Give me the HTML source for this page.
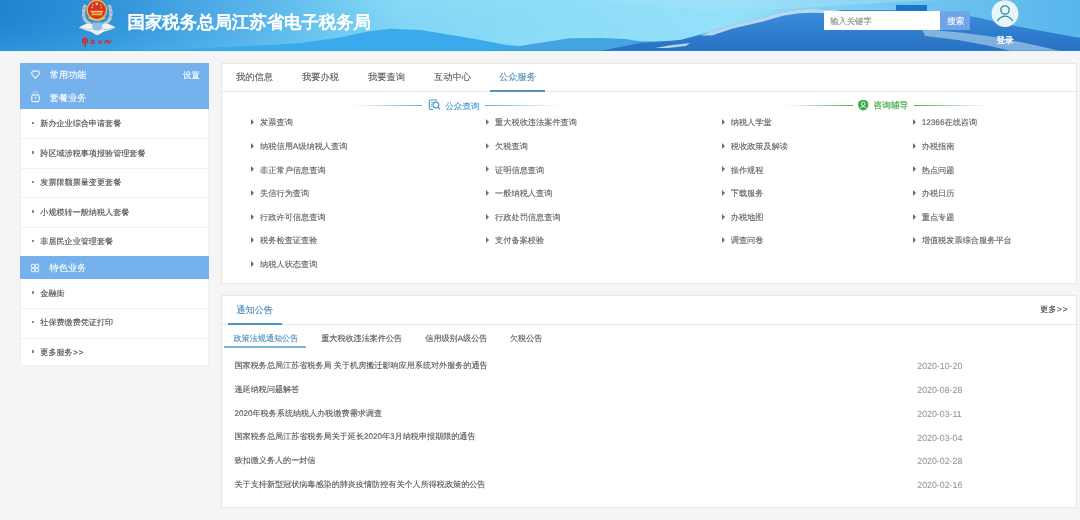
<!DOCTYPE html>
<html><head><meta charset="utf-8">
<style>
*{margin:0;padding:0;box-sizing:border-box}
html,body{width:1080px;height:520px;overflow:hidden;background:#f5f5f5;font-family:"Liberation Sans",sans-serif;text-rendering:geometricPrecision;color:#555}
.a{position:absolute}
.t{position:absolute;white-space:nowrap;line-height:1}
.bul{position:absolute;width:2.6px;height:2.6px;background:#8a8a8a}
.tri{position:absolute;width:0;height:0;border-left:3.3px solid #707070;border-top:3px solid transparent;border-bottom:3px solid transparent}
</style></head><body>
<div style="position:absolute;left:-6px;top:-6px;width:1092px;height:532px;background:#f5f5f5;filter:blur(0.4px)"><div style="position:absolute;left:6px;top:6px;width:1080px;height:520px">

<svg class="a" style="left:-6px;top:-6px" width="1092" height="58" viewBox="-6 -6 1092 58">
<defs>
<linearGradient id="sky" x1="0" y1="0" x2="1080" y2="0" gradientUnits="userSpaceOnUse">
<stop offset="0" stop-color="#2186d2"/>
<stop offset="0.1" stop-color="#3295db"/>
<stop offset="0.23" stop-color="#5ab6eb"/>
<stop offset="0.3" stop-color="#72cbf3"/>
<stop offset="0.37" stop-color="#8adcf8"/>
<stop offset="0.5" stop-color="#90e0f9"/>
<stop offset="0.68" stop-color="#95e0fa"/>
<stop offset="0.85" stop-color="#70c4f0"/>
<stop offset="1" stop-color="#58b6ec"/>
</linearGradient>
<linearGradient id="skyv" x1="0" y1="0" x2="0" y2="51" gradientUnits="userSpaceOnUse">
<stop offset="0" stop-color="#0a5fb0" stop-opacity="0.02"/>
<stop offset="1" stop-color="#5fd0ff" stop-opacity="0.18"/>
</linearGradient>
<linearGradient id="m3" x1="0" y1="0" x2="0" y2="51" gradientUnits="userSpaceOnUse">
<stop offset="0.18" stop-color="#3d8edb"/>
<stop offset="0.6" stop-color="#3080cf"/>
<stop offset="1" stop-color="#2870c3"/>
</linearGradient>
<linearGradient id="hfade" x1="0" y1="0" x2="700" y2="0" gradientUnits="userSpaceOnUse">
<stop offset="0" stop-color="#fff"/>
<stop offset="0.5" stop-color="#fff"/>
<stop offset="1" stop-color="#000"/>
</linearGradient>
<mask id="mk"><rect x="-6" y="-6" width="1092" height="57" fill="url(#hfade)"/></mask>
</defs>
<rect x="-6" y="-6" width="1092" height="57" fill="url(#sky)"/>
<rect x="-6" y="-6" width="1092" height="57" fill="url(#skyv)" mask="url(#mk)"/>
<path d="M600 0 L700 10 L780 9 L880 3 L940 0 Z" fill="#a6e2f9" opacity="0.45"/>
<path d="M120 51 L200 48 L270 45 L300 43 L340 37.5 L365 32 L390 28.8 L420 30 L445 34 L475 39 L507 45 L540 47.5 L540 51 Z" fill="#3aaaed"/>
<path d="M490 51 L520 46 L545 42 L570 38.3 L600 38 L625 39 L640 41.3 L680 42 L700 51 Z" fill="#44a4e2"/>
<path d="M600 51 L640 43 L680 40 L710 32 L732 25 L762 18 L783 12 L799 9.4 L813 9 L835 10 L896 10 L930 11 L960 15 L975 17 L1020 27 L1086 39 L1086 51 Z" fill="url(#m3)"/>
<path d="M700 35.5 L710 32 L732 25 L762 18 L783 12 L799 9.4 L813 9 L835 10 L850 12 L835 13.5 L813 12.8 L799 13.2 L783 15.8 L762 21.8 L732 28.8 L712 35.5 Z" fill="#e3f2fb" opacity="0.75"/>
<path d="M922 29 L960 32.5 L995 37 L1030 44 L1065 52 L1015 52 L990 46 L958 40 L925 36 Z" fill="#c6e0f2" opacity="0.55"/>
<path d="M655 48 L672 45 L690 43 L686 46 L668 48 Z" fill="#d6ecf8" opacity="0.8"/>
<rect x="896" y="5" width="31" height="6" fill="#1a74cc"/>
<rect x="-6" y="50.2" width="1092" height="0.8" fill="#3a98d6" opacity="0.5"/>
<rect x="-6" y="51" width="1092" height="1" fill="#e4f7fd"/>
</svg>
<svg class="a" style="left:75px;top:0" width="44" height="48" viewBox="0 0 44 48">
<path d="M10.5 5 Q7 12 9.5 19 Q12 23 16 24" fill="none" stroke="#c5ccd2" stroke-width="3.2" opacity="0.9"/>
<path d="M34 5 Q37.5 12 35 19 Q32.5 23 28.5 24" fill="none" stroke="#c5ccd2" stroke-width="3.2" opacity="0.9"/>
<path d="M10.5 7 L8.5 9 M9 12 L7 13 M9.5 16 L7.5 17.5" stroke="#7f8b96" stroke-width="0.8"/>
<path d="M34 7 L36 9 M35.5 12 L37.5 13 M35 16 L37 17.5" stroke="#7f8b96" stroke-width="0.8"/>
<circle cx="21.8" cy="10" r="10.4" fill="#e8bc48"/>
<circle cx="21.8" cy="10" r="9" fill="#d8302e"/>
<circle cx="21.8" cy="3.8" r="1.4" fill="#f5d24a"/>
<circle cx="17.8" cy="5" r="0.8" fill="#f5d24a"/>
<circle cx="25.8" cy="5" r="0.8" fill="#f5d24a"/>
<circle cx="17.2" cy="7.6" r="0.8" fill="#f5d24a"/>
<circle cx="26.4" cy="7.6" r="0.8" fill="#f5d24a"/>
<rect x="15.6" y="10.8" width="12.4" height="1.5" fill="#f2c94a"/>
<rect x="16.6" y="12.3" width="10.4" height="3" fill="#e9b93e"/>
<path d="M17.6 13.2 L26 13.2" stroke="#d8302e" stroke-width="0.7"/>
<path d="M13.2 16.6 Q21.8 21.8 30.4 16.6 L29.8 18.8 Q21.8 23 13.8 18.8 Z" fill="#f0c040"/>
<path d="M4 27.5 Q12 22 18 24 L22.3 30 L26.6 24 Q32.6 22 40.6 27.5 Q34 31 28 32 Q24 35 22.3 35 Q20.6 35 16.6 32 Q10.6 31 4 27.5 Z" fill="#eef2f5"/>
<path d="M17 22.5 L27.6 22.5 L27 29 Q22.3 32.5 17.6 29 Z" fill="#8fc0e4"/>
<path d="M6 28 Q13 30.5 17 29" stroke="#aab4bc" stroke-width="0.7" fill="none"/>
<path d="M38.6 28 Q31.6 30.5 27.6 29" stroke="#aab4bc" stroke-width="0.7" fill="none"/>
<path d="M10 37 L10.3 47 M7.6 39.6 L12.4 39.6 L12 42.6 L8 42.6 Z" stroke="#d02a2f" stroke-width="1.5" fill="none"/>
<path d="M15.5 41 Q17 39 19 41 Q17.5 43 15.8 43.5 M17 41.5 L19.5 44" stroke="#d02a2f" stroke-width="1.2" fill="none"/>
<path d="M23.5 40.5 L24 44 M25.5 40 Q26.5 42 25.8 44" stroke="#d02a2f" stroke-width="1.1" fill="none"/>
<path d="M29.5 43 Q31 39 33 41 Q34.5 44 36.5 40.5 M31.5 40 L34 44" stroke="#d02a2f" stroke-width="1.2" fill="none"/>
</svg>
<div class="t" style="left:127.50px;top:14.40px;font-size:17.4px;color:#fff;-webkit-text-stroke:0.1px #fff;-webkit-text-stroke:0.8px #fff">国家税务总局江苏省电子税务局</div>
<div class="a" style="left:824px;top:11px;width:116px;height:19px;background:#fff"></div>
<div class="t" style="left:830.20px;top:17.45px;font-size:8.3px;color:#8a8a8a;-webkit-text-stroke:0.1px #8a8a8a;">输入关键字</div>
<div class="a" style="left:940px;top:11px;width:30px;height:19px;background:#6fa5e7"></div>
<div class="t" style="left:947.20px;top:17.33px;font-size:8.6px;color:#fff;-webkit-text-stroke:0.1px #fff;">搜索</div>
<svg class="a" style="left:990px;top:0" width="30" height="30" viewBox="0 0 30 30">
<circle cx="15" cy="13.6" r="13.4" fill="#e9f6f9"/>
<circle cx="15" cy="10" r="4.2" fill="none" stroke="#2a8d9c" stroke-width="1.3"/>
<path d="M7.2 20.8 Q15 11.5 22.8 20.8" fill="none" stroke="#2a8d9c" stroke-width="1.3"/>
</svg>
<div class="t" style="left:996.50px;top:36.23px;font-size:8.6px;color:#fff;-webkit-text-stroke:0.1px #fff;-webkit-text-stroke:0.3px #fff">登录</div>
<div class="a" style="left:20px;top:63px;width:189px;height:303px;background:#fff;border:1px solid #eeeeee"></div>
<div class="a" style="left:20px;top:63px;width:189px;height:45.5px;background:#74b1ed"></div>
<svg class="a" style="left:29px;top:68px" width="13" height="13" viewBox="0 0 13 13">
<path d="M6.5 10.2 L3.4 7 Q2.3 5.7 2.8 4.2 Q3.4 2.7 4.8 2.7 Q5.9 2.7 6.5 3.7 Q7.1 2.7 8.2 2.7 Q9.6 2.7 10.2 4.2 Q10.7 5.7 9.6 7 Z" fill="none" stroke="#fff" stroke-width="1.05" stroke-linejoin="round"/>
</svg>
<div class="t" style="left:49.80px;top:70.70px;font-size:9.2px;color:#fff;-webkit-text-stroke:0.1px #fff;-webkit-text-stroke:0.12px #fff">常用功能</div>
<div class="t" style="left:183.00px;top:71.01px;font-size:8.4px;color:#fff;-webkit-text-stroke:0.1px #fff;-webkit-text-stroke:0.12px #fff">设置</div>
<svg class="a" style="left:29px;top:87px" width="13" height="17" viewBox="0 0 13 17">
<path d="M4.2 8 Q4.2 4.4 6.5 4.4 Q8.8 4.4 8.8 8" fill="none" stroke="#fff" stroke-width="0.85" opacity="0.6"/>
<rect x="2.8" y="8" width="7.4" height="6.6" rx="1.1" fill="none" stroke="#fff" stroke-width="1"/>
<path d="M5.3 10.3 L7.7 10.3 L6.5 12 Z" fill="#fff"/>
</svg>
<div class="t" style="left:49.80px;top:93.80px;font-size:9.2px;color:#fff;-webkit-text-stroke:0.1px #fff;-webkit-text-stroke:0.12px #fff">套餐业务</div>
<div class="bul" style="left:31.6px;top:121.8px"></div>
<div class="t" style="left:40.30px;top:120.47px;font-size:8.1px;color:#4a4a4a;-webkit-text-stroke:0.1px #4a4a4a;">新办企业综合申请套餐</div>
<div class="a" style="left:21px;top:138.0px;width:187px;height:1px;background:#f0f0f0"></div>
<div class="bul" style="left:31.6px;top:151.2px"></div>
<div class="t" style="left:40.30px;top:149.97px;font-size:8.1px;color:#4a4a4a;-webkit-text-stroke:0.1px #4a4a4a;">跨区域涉税事项报验管理套餐</div>
<div class="a" style="left:21px;top:167.5px;width:187px;height:1px;background:#f0f0f0"></div>
<div class="bul" style="left:31.6px;top:180.8px"></div>
<div class="t" style="left:40.30px;top:179.47px;font-size:8.1px;color:#4a4a4a;-webkit-text-stroke:0.1px #4a4a4a;">发票限额票量变更套餐</div>
<div class="a" style="left:21px;top:197.0px;width:187px;height:1px;background:#f0f0f0"></div>
<div class="bul" style="left:31.6px;top:210.2px"></div>
<div class="t" style="left:40.30px;top:208.97px;font-size:8.1px;color:#4a4a4a;-webkit-text-stroke:0.1px #4a4a4a;">小规模转一般纳税人套餐</div>
<div class="a" style="left:21px;top:226.5px;width:187px;height:1px;background:#f0f0f0"></div>
<div class="bul" style="left:31.6px;top:239.8px"></div>
<div class="t" style="left:40.30px;top:238.47px;font-size:8.1px;color:#4a4a4a;-webkit-text-stroke:0.1px #4a4a4a;">非居民企业管理套餐</div>
<div class="a" style="left:20px;top:256px;width:189px;height:22.5px;background:#74b1ed"></div>
<svg class="a" style="left:29px;top:262px" width="12" height="12" viewBox="0 0 12 12">
<circle cx="4" cy="4" r="1.9" fill="none" stroke="#fff" stroke-width="0.9"/>
<circle cx="8" cy="4" r="1.9" fill="none" stroke="#fff" stroke-width="0.9"/>
<circle cx="4" cy="8" r="1.9" fill="none" stroke="#fff" stroke-width="0.9"/>
<circle cx="8" cy="8" r="1.9" fill="none" stroke="#fff" stroke-width="0.9"/>
</svg>
<div class="t" style="left:49.60px;top:263.60px;font-size:9.2px;color:#fff;-webkit-text-stroke:0.1px #fff;-webkit-text-stroke:0.12px #fff">特色业务</div>
<div class="bul" style="left:31.6px;top:291.1px"></div>
<div class="t" style="left:40.30px;top:289.87px;font-size:8.1px;color:#4a4a4a;-webkit-text-stroke:0.1px #4a4a4a;">金融街</div>
<div class="a" style="left:21px;top:308.0px;width:187px;height:1px;background:#f0f0f0"></div>
<div class="bul" style="left:31.6px;top:320.6px"></div>
<div class="t" style="left:40.30px;top:319.37px;font-size:8.1px;color:#4a4a4a;-webkit-text-stroke:0.1px #4a4a4a;">社保费缴费凭证打印</div>
<div class="a" style="left:21px;top:337.5px;width:187px;height:1px;background:#f0f0f0"></div>
<div class="bul" style="left:31.6px;top:350.1px"></div>
<div class="t" style="left:40.30px;top:348.87px;font-size:8.1px;color:#4a4a4a;-webkit-text-stroke:0.1px #4a4a4a;">更多服务<span style="letter-spacing:0.8px;margin-left:0.5px">&gt;&gt;</span></div>
<div class="a" style="left:221px;top:63px;width:856px;height:220.8px;background:#fff;border:1px solid #e8e8e8"></div>
<div class="a" style="left:222px;top:90.5px;width:854px;height:1px;background:#e6e6e6"></div>
<div class="t" style="left:236.00px;top:73.48px;font-size:9.25px;color:#585858;-webkit-text-stroke:0.1px #585858;">我的信息</div>
<div class="t" style="left:302.00px;top:73.48px;font-size:9.25px;color:#585858;-webkit-text-stroke:0.1px #585858;">我要办税</div>
<div class="t" style="left:368.00px;top:73.48px;font-size:9.25px;color:#585858;-webkit-text-stroke:0.1px #585858;">我要查询</div>
<div class="t" style="left:434.00px;top:73.48px;font-size:9.25px;color:#585858;-webkit-text-stroke:0.1px #585858;">互动中心</div>
<div class="t" style="left:499.00px;top:73.48px;font-size:9.25px;color:#4a8abc;-webkit-text-stroke:0.1px #4a8abc;">公众服务</div>
<div class="a" style="left:490px;top:89.8px;width:55px;height:2px;background:#5591be"></div>
<div class="a" style="left:352px;top:104.5px;width:70px;height:1.2px;background:linear-gradient(to right,rgba(110,178,220,0),#68aedb)"></div>
<div class="a" style="left:485px;top:104.5px;width:75px;height:1.2px;background:linear-gradient(to left,rgba(110,178,220,0),#68aedb)"></div>
<svg class="a" style="left:427px;top:98px" width="14" height="13" viewBox="0 0 14 13">
<path d="M10.5 2 L3.6 2 Q2.3 2 2.3 3.3 L2.3 10.3 Q2.3 11.5 3.6 11.5 L6.2 11.5" fill="none" stroke="#3d9cc8" stroke-width="1.1"/>
<path d="M4 4.5 L6.3 4.5 M4 6.8 L5.2 6.8 M4 9 L5.2 9" stroke="#3d9cc8" stroke-width="0.8"/>
<circle cx="8.9" cy="7" r="2.9" fill="none" stroke="#3d9cc8" stroke-width="1.1"/>
<path d="M11 9.1 L13 11.4" stroke="#3d9cc8" stroke-width="1.2"/>
</svg>
<div class="t" style="left:445.20px;top:101.63px;font-size:8.6px;color:#45a0d2;-webkit-text-stroke:0.1px #45a0d2;">公众查询</div>
<div class="a" style="left:785px;top:104.5px;width:68px;height:1.2px;background:linear-gradient(to right,rgba(74,168,74,0),#52ad52)"></div>
<div class="a" style="left:913.5px;top:104.5px;width:72px;height:1.2px;background:linear-gradient(to left,rgba(74,168,74,0),#52ad52)"></div>
<svg class="a" style="left:857px;top:98.5px" width="12.5" height="12" viewBox="0 0 12.5 12">
<path d="M6.2 0.8 Q9 0.8 10.6 2.4 Q11.6 4 11.3 6.6 Q11 9.6 8.8 10.8 Q6.2 11.8 3.6 10.8 Q1.4 9.6 1.1 6.6 Q0.8 4 1.8 2.4 Q3.4 0.8 6.2 0.8 Z" fill="#3fab4c"/>
<circle cx="6.2" cy="4.8" r="1.8" fill="none" stroke="#e8f8e8" stroke-width="0.9"/>
<path d="M3 9.3 Q6.2 5.8 9.4 9.3" fill="none" stroke="#e8f8e8" stroke-width="0.9"/>
</svg>
<div class="t" style="left:873.50px;top:101.39px;font-size:8.7px;color:#5ab45a;-webkit-text-stroke:0.1px #5ab45a;-webkit-text-stroke:0.3px #5ab45a">咨询辅导</div>
<div class="tri" style="left:251.1px;top:119.1px"></div>
<div class="t" style="left:260.10px;top:119.28px;font-size:8.2px;color:#606060;-webkit-text-stroke:0.1px #606060;">发票查询</div>
<div class="tri" style="left:251.1px;top:142.7px"></div>
<div class="t" style="left:260.10px;top:142.91px;font-size:8.2px;color:#606060;-webkit-text-stroke:0.1px #606060;">纳税信用A级纳税人查询</div>
<div class="tri" style="left:251.1px;top:166.4px"></div>
<div class="t" style="left:260.10px;top:166.54px;font-size:8.2px;color:#606060;-webkit-text-stroke:0.1px #606060;">非正常户信息查询</div>
<div class="tri" style="left:251.1px;top:190.0px"></div>
<div class="t" style="left:260.10px;top:190.17px;font-size:8.2px;color:#606060;-webkit-text-stroke:0.1px #606060;">失信行为查询</div>
<div class="tri" style="left:251.1px;top:213.6px"></div>
<div class="t" style="left:260.10px;top:213.80px;font-size:8.2px;color:#606060;-webkit-text-stroke:0.1px #606060;">行政许可信息查询</div>
<div class="tri" style="left:251.1px;top:237.2px"></div>
<div class="t" style="left:260.10px;top:237.43px;font-size:8.2px;color:#606060;-webkit-text-stroke:0.1px #606060;">税务检查证查验</div>
<div class="tri" style="left:251.1px;top:260.9px"></div>
<div class="t" style="left:260.10px;top:261.06px;font-size:8.2px;color:#606060;-webkit-text-stroke:0.1px #606060;">纳税人状态查询</div>
<div class="tri" style="left:486.1px;top:119.1px"></div>
<div class="t" style="left:495.10px;top:119.28px;font-size:8.2px;color:#606060;-webkit-text-stroke:0.1px #606060;">重大税收违法案件查询</div>
<div class="tri" style="left:486.1px;top:142.7px"></div>
<div class="t" style="left:495.10px;top:142.91px;font-size:8.2px;color:#606060;-webkit-text-stroke:0.1px #606060;">欠税查询</div>
<div class="tri" style="left:486.1px;top:166.4px"></div>
<div class="t" style="left:495.10px;top:166.54px;font-size:8.2px;color:#606060;-webkit-text-stroke:0.1px #606060;">证明信息查询</div>
<div class="tri" style="left:486.1px;top:190.0px"></div>
<div class="t" style="left:495.10px;top:190.17px;font-size:8.2px;color:#606060;-webkit-text-stroke:0.1px #606060;">一般纳税人查询</div>
<div class="tri" style="left:486.1px;top:213.6px"></div>
<div class="t" style="left:495.10px;top:213.80px;font-size:8.2px;color:#606060;-webkit-text-stroke:0.1px #606060;">行政处罚信息查询</div>
<div class="tri" style="left:486.1px;top:237.2px"></div>
<div class="t" style="left:495.10px;top:237.43px;font-size:8.2px;color:#606060;-webkit-text-stroke:0.1px #606060;">支付备案校验</div>
<div class="tri" style="left:721.7px;top:119.1px"></div>
<div class="t" style="left:730.70px;top:119.28px;font-size:8.2px;color:#606060;-webkit-text-stroke:0.1px #606060;">纳税人学堂</div>
<div class="tri" style="left:721.7px;top:142.7px"></div>
<div class="t" style="left:730.70px;top:142.91px;font-size:8.2px;color:#606060;-webkit-text-stroke:0.1px #606060;">税收政策及解读</div>
<div class="tri" style="left:721.7px;top:166.4px"></div>
<div class="t" style="left:730.70px;top:166.54px;font-size:8.2px;color:#606060;-webkit-text-stroke:0.1px #606060;">操作规程</div>
<div class="tri" style="left:721.7px;top:190.0px"></div>
<div class="t" style="left:730.70px;top:190.17px;font-size:8.2px;color:#606060;-webkit-text-stroke:0.1px #606060;">下载服务</div>
<div class="tri" style="left:721.7px;top:213.6px"></div>
<div class="t" style="left:730.70px;top:213.80px;font-size:8.2px;color:#606060;-webkit-text-stroke:0.1px #606060;">办税地图</div>
<div class="tri" style="left:721.7px;top:237.2px"></div>
<div class="t" style="left:730.70px;top:237.43px;font-size:8.2px;color:#606060;-webkit-text-stroke:0.1px #606060;">调查问卷</div>
<div class="tri" style="left:912.7px;top:119.1px"></div>
<div class="t" style="left:921.70px;top:119.28px;font-size:8.2px;color:#606060;-webkit-text-stroke:0.1px #606060;">12366在线咨询</div>
<div class="tri" style="left:912.7px;top:142.7px"></div>
<div class="t" style="left:921.70px;top:142.91px;font-size:8.2px;color:#606060;-webkit-text-stroke:0.1px #606060;">办税指南</div>
<div class="tri" style="left:912.7px;top:166.4px"></div>
<div class="t" style="left:921.70px;top:166.54px;font-size:8.2px;color:#606060;-webkit-text-stroke:0.1px #606060;">热点问题</div>
<div class="tri" style="left:912.7px;top:190.0px"></div>
<div class="t" style="left:921.70px;top:190.17px;font-size:8.2px;color:#606060;-webkit-text-stroke:0.1px #606060;">办税日历</div>
<div class="tri" style="left:912.7px;top:213.6px"></div>
<div class="t" style="left:921.70px;top:213.80px;font-size:8.2px;color:#606060;-webkit-text-stroke:0.1px #606060;">重点专题</div>
<div class="tri" style="left:912.7px;top:237.2px"></div>
<div class="t" style="left:921.70px;top:237.43px;font-size:8.2px;color:#606060;-webkit-text-stroke:0.1px #606060;">增值税发票综合服务平台</div>
<div class="a" style="left:221px;top:294.6px;width:856px;height:213.9px;background:#fff;border:1px solid #e8e8e8"></div>
<div class="a" style="left:222px;top:323.5px;width:854px;height:1px;background:#e6e6e6"></div>
<div class="t" style="left:236.20px;top:305.90px;font-size:9.2px;color:#4a88ba;-webkit-text-stroke:0.1px #4a88ba;">通知公告</div>
<div class="a" style="left:227.6px;top:322.8px;width:54px;height:2px;background:#5591be"></div>
<div class="t" style="left:1040.00px;top:305.88px;font-size:8.2px;color:#444;-webkit-text-stroke:0.1px #444;">更多<span style="letter-spacing:0.9px;margin-left:0.6px">&gt;&gt;</span></div>
<div class="t" style="left:233.50px;top:335.22px;font-size:8.1px;color:#4b8fc1;-webkit-text-stroke:0.1px #4b8fc1;">政策法规通知公告</div>
<div class="t" style="left:321.20px;top:335.22px;font-size:8.1px;color:#555;-webkit-text-stroke:0.1px #555;">重大税收违法案件公告</div>
<div class="t" style="left:425.30px;top:335.22px;font-size:8.1px;color:#555;-webkit-text-stroke:0.1px #555;">信用级别A级公告</div>
<div class="t" style="left:510.00px;top:335.22px;font-size:8.1px;color:#555;-webkit-text-stroke:0.1px #555;">欠税公告</div>
<div class="a" style="left:224px;top:346.3px;width:81.5px;height:1.5px;background:#7db4dc"></div>
<div class="t" style="left:234.50px;top:361.92px;font-size:8.1px;color:#555;-webkit-text-stroke:0.1px #555;">国家税务总局江苏省税务局 关于机房搬迁影响应用系统对外服务的通告</div>
<div class="t" style="left:917.30px;top:362.16px;font-size:8.8px;color:#999;-webkit-text-stroke:0.1px #999;">2020-10-20</div>
<div class="t" style="left:234.50px;top:385.72px;font-size:8.1px;color:#555;-webkit-text-stroke:0.1px #555;">递延纳税问题解答</div>
<div class="t" style="left:917.30px;top:385.96px;font-size:8.8px;color:#999;-webkit-text-stroke:0.1px #999;">2020-08-28</div>
<div class="t" style="left:234.50px;top:409.52px;font-size:8.1px;color:#555;-webkit-text-stroke:0.1px #555;">2020年税务系统纳税人办税缴费需求调查</div>
<div class="t" style="left:917.30px;top:409.76px;font-size:8.8px;color:#999;-webkit-text-stroke:0.1px #999;">2020-03-11</div>
<div class="t" style="left:234.50px;top:433.32px;font-size:8.1px;color:#555;-webkit-text-stroke:0.1px #555;">国家税务总局江苏省税务局关于延长2020年3月纳税申报期限的通告</div>
<div class="t" style="left:917.30px;top:433.56px;font-size:8.8px;color:#999;-webkit-text-stroke:0.1px #999;">2020-03-04</div>
<div class="t" style="left:234.50px;top:457.12px;font-size:8.1px;color:#555;-webkit-text-stroke:0.1px #555;">致扣缴义务人的一封信</div>
<div class="t" style="left:917.30px;top:457.36px;font-size:8.8px;color:#999;-webkit-text-stroke:0.1px #999;">2020-02-28</div>
<div class="t" style="left:234.50px;top:480.92px;font-size:8.1px;color:#555;-webkit-text-stroke:0.1px #555;">关于支持新型冠状病毒感染的肺炎疫情防控有关个人所得税政策的公告</div>
<div class="t" style="left:917.30px;top:481.16px;font-size:8.8px;color:#999;-webkit-text-stroke:0.1px #999;">2020-02-16</div>
</div></div></body></html>
